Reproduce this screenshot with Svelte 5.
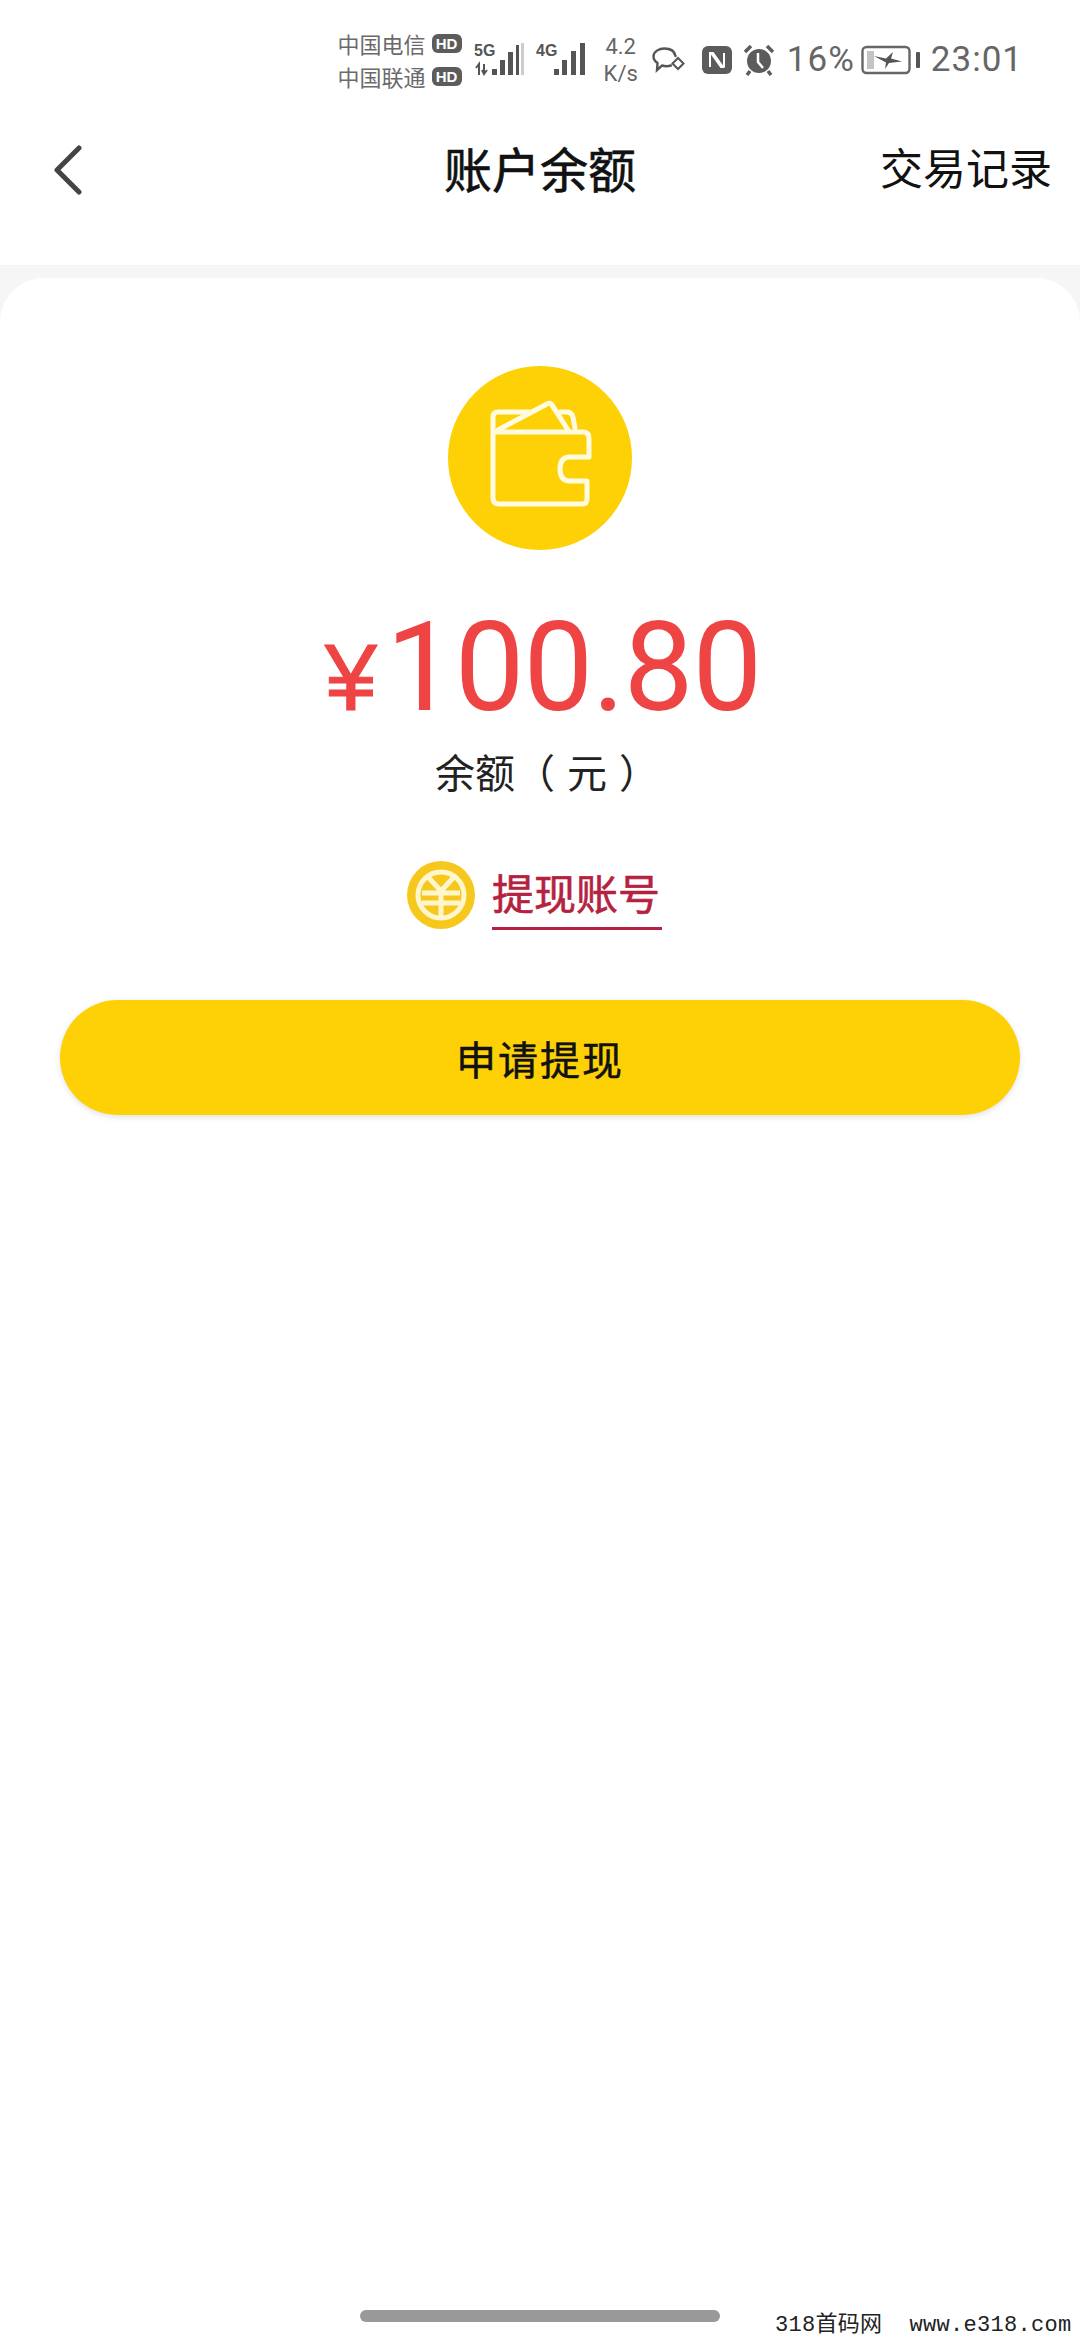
<script>
  const balance = '100.80';
</script>

<div class="page">
  <div class="status">
    <div class="carriers">
      <div class="carrier"><span>中国电信</span><b>HD</b></div>
      <div class="carrier"><span>中国联通</span><b>HD</b></div>
    </div>
    <svg class="signal" width="50" height="36" viewBox="0 0 50 36">
      <text x="0" y="14" class="net">5G</text>
      <path d="M5 33 V22 L2 26 M10 22 V31 M8 28 L10 32 L13 28" fill="none" stroke="#555" stroke-width="2" />
      <g fill="#555">
        <rect x="18" y="27" width="5" height="6" />
        <rect x="26" y="18" width="5" height="15" />
        <rect x="34" y="10" width="5" height="23" />
        <rect x="42" y="3" width="3" height="30" />
        <rect x="47" y="1" width="3" height="32" fill="#ccc" />
      </g>
    </svg>
    <svg class="signal2" width="50" height="36" viewBox="0 0 50 36">
      <text x="0" y="14" class="net">4G</text>
      <g fill="#555">
        <rect x="18" y="27" width="5" height="6" />
        <rect x="26" y="18" width="5" height="15" />
        <rect x="35" y="9" width="5" height="24" />
        <rect x="44" y="1" width="5" height="32" />
      </g>
    </svg>
    <div class="speed"><span>4.2</span><span>K/s</span></div>
    <svg class="wechat" width="33" height="26" viewBox="0 0 33 26" fill="none" stroke="#555" stroke-width="2.400">
      <path d="M19 18.500 C16 19.500 13 19.500 10 18.500 L5 23 L5.500 16 C2.500 14 1.500 11.500 1.500 9.500 C1.500 4.500 7 1.500 12.500 1.500 C18 1.500 22.500 4 23.500 9" stroke-linecap="round" />
      <path d="M26 11 L31.500 16.500 L26 22 L20.500 16.500 Z" stroke-width="2" />
    </svg>
    <svg class="nfc" width="30" height="28" viewBox="0 0 30 28">
      <rect width="30" height="28" rx="6" fill="#5c5c5c" />
      <path d="M8 21 V7 H11 L21 21 H19 L9 7 M22 7 V21" fill="none" stroke="#fff" stroke-width="2" />
    </svg>
    <svg class="alarm" width="32" height="32" viewBox="0 0 32 32">
      <circle cx="16" cy="17" r="12" fill="#5c5c5c" />
      <path d="M2 8 L8 2 M30 8 L24 2 M7 27 L4 31 M25 27 L28 31" stroke="#5c5c5c" stroke-width="3.500" />
      <path d="M15 9 V18 L20 24" fill="none" stroke="#fff" stroke-width="2.500" />
    </svg>
    <span class="percent">16%</span>
    <svg class="battery" width="59" height="30" viewBox="0 0 59 30">
      <rect x="1.500" y="2" width="47" height="26" rx="4" fill="none" stroke="#666" stroke-width="2.400" />
      <rect x="6" y="6" width="7" height="18" fill="#c4c4c4" />
      <path d="M13 11 L25 13.500 L32 7 L30 13.500 L41 16.500 L28 18 L24 24 L25 17.500 Z" fill="#555" />
      <rect x="55" y="7" width="4" height="16" rx="1" fill="#555" />
    </svg>
    <span class="clock">23:01</span>
  </div>

  <nav class="nav">
    <svg class="back" width="30" height="50" viewBox="0 0 30 50" fill="none" stroke="#444" stroke-width="5" stroke-linecap="round" stroke-linejoin="round">
      <path d="M27 3 L5 25 L27 47" />
    </svg>
    <h1>账户余额</h1>
    <span class="records">交易记录</span>
  </nav>

  <div class="sheet">
    <main class="card">
      <div class="wallet">
        <svg width="110" height="110" viewBox="0 0 110 110" fill="none" stroke="#fffbe0" stroke-width="5" stroke-linejoin="round" stroke-linecap="round">
          <path d="M8 30 V14 Q8 9 13 9 H45 M8 30 V95 Q8 101 14 101 H97 Q102 101 102 96 V78 H85 Q75 78 75 66 Q75 54 85 54 H104 V35 Q104 29 98 29 H8" />
          <path d="M13 27 L62 1 Q65 -1 67 2 L83 27" />
          <path d="M75 9 H83 Q87 10 88 14 L90 25" />
        </svg>
      </div>
      <div class="amount"><span class="yen">¥</span>{balance}</div>
      <div class="label">余额（ 元 ）</div>
      <div class="account">
        <svg width="70" height="70" viewBox="0 0 70 70">
          <circle cx="35" cy="35" r="34" fill="#f6c81e" />
          <circle cx="35" cy="35" r="23" fill="#f6c81e" stroke="#fff6cc" stroke-width="5" />
          <path d="M22 17 L35 31 L48 17 M35 31 V58 M16 33 H54 M16 43 H54" fill="none" stroke="#fff6cc" stroke-width="5" />
        </svg>
        <span class="account-text">提现账号</span>
      </div>
      <button class="withdraw">申请提现</button>
    </main>
  </div>

  <footer class="footer">
    <div class="home-bar"></div>
    <span class="watermark">318首码网&nbsp;&nbsp;www.e318.com</span>
  </footer>
</div>

<style>
  :global(body) {
    margin: 0;
    background: #fff;
  }

  .page {
    width: 1080px;
    height: 2339px;
    display: flex;
    flex-direction: column;
    font-family: "Noto Sans CJK SC", "Noto Sans", sans-serif;
    background: #fff;
    overflow: hidden;
  }

  .status {
    height: 90px;
    box-sizing: border-box;
    padding: 29px 57px 0 0;
    display: flex;
    justify-content: flex-end;
    align-items: center;
    color: #666;
  }

  .carriers {
    display: flex;
    flex-direction: column;
    gap: 3px;
    margin-right: 12px;
  }

  .carrier {
    display: flex;
    align-items: center;
    gap: 6px;
    height: 30px;
    font-size: 22px;
    color: #6a6a6a;
  }

  .carrier b {
    width: 30px;
    height: 19px;
    border-radius: 6px;
    background: #5c5c5c;
    color: #fff;
    font: 700 15px/19px "Liberation Sans", sans-serif;
    text-align: center;
  }

  .net {
    font: 700 16px "Liberation Sans", sans-serif;
    fill: #555;
  }

  .signal {
    margin-right: 12px;
  }

  .signal2 {
    margin-right: 18px;
  }

  .speed {
    display: flex;
    flex-direction: column;
    align-items: center;
    font: 22px/27px "Roboto", sans-serif;
    color: #666;
    margin-right: 14px;
  }

  .wechat {
    margin-right: 17px;
  }

  .nfc {
    margin-right: 11px;
  }

  .alarm {
    margin-right: 12px;
  }

  .percent,
  .clock {
    font: 35px "Roboto", sans-serif;
    letter-spacing: 1px;
    color: #666;
  }

  .percent {
    margin-right: 6px;
  }

  .battery {
    margin-right: 11px;
  }

  .nav {
    height: 175px;
    box-sizing: border-box;
    padding: 0 28px 24px 52px;
    position: relative;
    display: flex;
    justify-content: space-between;
    align-items: center;
  }

  .back {
    margin-top: 8px;
  }

  .nav h1 {
    position: absolute;
    left: 0;
    right: 0;
    top: 42px;
    margin: 0;
    text-align: center;
    font-size: 48px;
    line-height: 70px;
    font-weight: 400;
    -webkit-text-stroke: 0.6px #111;
    color: #111;
  }

  .records {
    font-size: 43px;
    color: #111;
  }

  .sheet {
    flex: 1;
    display: flex;
    padding-top: 13px;
    background: #f6f6f6;
  }

  .card {
    flex: 1;
    display: flex;
    flex-direction: column;
    align-items: center;
    padding-top: 88px;
    background: #fff;
    border-radius: 44px 44px 0 0;
  }

  .wallet {
    width: 184px;
    height: 184px;
    border-radius: 50%;
    background: #fdd106;
    display: flex;
    align-items: center;
    justify-content: center;
  }

  .wallet svg {
    overflow: visible;
  }

  .amount {
    margin-top: 53px;
    margin-left: 6px;
    font: 124px/130px "Roboto", sans-serif;
    color: #ee4444;
    letter-spacing: -1px;
    display: flex;
    align-items: baseline;
  }

  .yen {
    font: 94px "Liberation Sans", sans-serif;
    -webkit-text-stroke: 1px #ee4444;
    margin-right: 10px;
  }

  .label {
    margin-top: 10px;
    margin-left: 14px;
    font-size: 40px;
    line-height: 56px;
    word-spacing: 3px;
    color: #222;
  }

  .account {
    margin-top: 61px;
    display: flex;
    align-items: center;
    gap: 16px;
    margin-right: 12px;
  }

  .account-text {
    font-size: 42px;
    font-weight: 400;
    -webkit-text-stroke: 0.6px #b5213f;
    line-height: 62px;
    color: #b5213f;
    border-bottom: 3px solid #b5213f;
    padding: 0 0 4px 0;
    width: 170px;
    white-space: nowrap;
  }

  .withdraw {
    margin-top: 70px;
    width: 960px;
    height: 115px;
    border: none;
    border-radius: 58px;
    background: #fdd106;
    box-shadow: 0 2px 6px rgba(0, 0, 0, 0.12);
    font-family: inherit;
    font-size: 40px;
    font-weight: 400;
    -webkit-text-stroke: 0.5px #111;
    letter-spacing: 2px;
    color: #111;
  }

  .footer {
    height: 29px;
    position: relative;
  }

  .home-bar {
    position: absolute;
    left: 360px;
    top: 0;
    width: 360px;
    height: 12px;
    border-radius: 6px;
    background: #999;
  }

  .watermark {
    position: absolute;
    left: 775px;
    top: 3px;
    font: 22px/26px "Liberation Mono", "Noto Sans CJK SC", monospace;
    letter-spacing: 0.3px;
    color: #222;
    white-space: nowrap;
  }
</style>
